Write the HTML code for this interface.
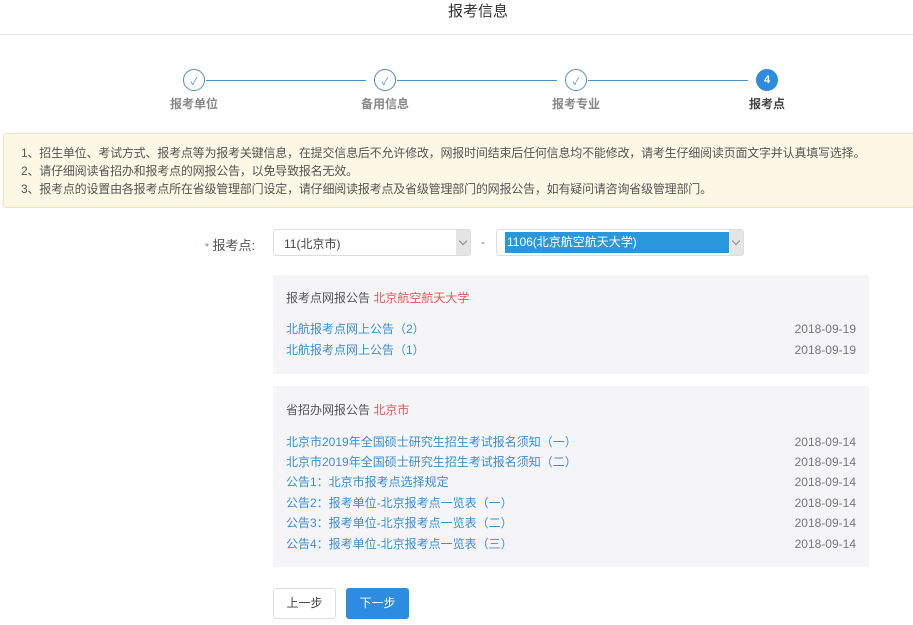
<!DOCTYPE html>
<html><head><meta charset="utf-8"><style>
*{margin:0;padding:0;box-sizing:border-box}
body{width:913px;height:625px;background:#fff;font-family:"Liberation Sans","Noto Sans CJK SC",sans-serif;font-size:12px;color:#555;position:relative;overflow:hidden}
.a{position:absolute;white-space:nowrap}
.title{left:0;width:956px;top:1px;text-align:center;font-size:15px;color:#333;line-height:22px}
.hr{left:0;top:34px;width:913px;height:1px;background:#e6e6e6}
.c{position:absolute;width:22px;height:22px;border-radius:50%;border:1px solid #4a90c8;top:69px;display:flex;align-items:center;justify-content:center;color:#4a90c8;font-size:10px}
.ln{position:absolute;top:80px;height:1px;background:#4a90c8}
.lb{position:absolute;top:95px;font-size:12px;color:#888;font-weight:bold;width:80px;text-align:center}
.notice{left:3px;top:133px;width:915px;height:75px;background:#fdf8e6;border:1px solid #f3e3b1;border-radius:3px;padding:10px 0 0 17px;line-height:18px;font-size:12px;color:#555;letter-spacing:-0.2px}
.sel{position:absolute;top:229px;height:27px;border:1px solid #ddd;border-radius:3px;background:#fff}
.sel .arr{position:absolute;right:0;top:0;width:14px;height:25px;background:#e5e5e5}
.sel .arr:after{content:"";position:absolute;left:4px;top:8px;width:5px;height:5px;border-right:1px solid #888;border-bottom:1px solid #888;transform:rotate(45deg)}
.panel{position:absolute;left:273px;width:596px;background:#f5f5f7}
.row{position:absolute;left:13px;right:13px;height:20px;line-height:20px}
.row span{color:#3a8ed4}
.row b{position:absolute;right:0;font-weight:normal;color:#777}
.hd{position:absolute;left:13px;color:#555}
.hd i{font-style:normal;color:#e05a5a}
.btn{position:absolute;top:588px;width:63px;height:31px;border-radius:3px;text-align:center;line-height:29px;font-size:12px}
</style></head><body>
<div class="a title">报考信息</div>
<div class="a hr"></div>
<div class="ln" style="left:206px;width:160px"></div>
<div class="ln" style="left:397px;width:160px"></div>
<div class="ln" style="left:588px;width:160px"></div>
<div class="c" style="left:183px">✓</div>
<div class="c" style="left:374px">✓</div>
<div class="c" style="left:565px">✓</div>
<div class="c" style="left:756px;background:#2d8ce0;border-color:#2d8ce0;color:#fff;font-weight:bold;font-size:11px">4</div>
<div class="lb" style="left:154px">报考单位</div>
<div class="lb" style="left:345px">备用信息</div>
<div class="lb" style="left:536px">报考专业</div>
<div class="lb" style="left:727px;color:#444">报考点</div>
<div class="a notice">1、招生单位、考试方式、报考点等为报考关键信息，在提交信息后不允许修改，网报时间结束后任何信息均不能修改，请考生仔细阅读页面文字并认真填写选择。<br>2、请仔细阅读省招办和报考点的网报公告，以免导致报名无效。<br>3、报考点的设置由各报考点所在省级管理部门设定，请仔细阅读报考点及省级管理部门的网报公告，如有疑问请咨询省级管理部门。</div>
<div class="a" style="left:205px;top:235px;font-size:13px;color:#555"><span style="color:#e05a5a;font-size:10px">*</span> 报考点:</div>
<div class="sel" style="left:273px;width:198px"><div class="a" style="left:10px;top:5px;font-size:12px;color:#444">11(北京市)</div><div class="arr"></div></div>
<div class="a" style="left:481px;top:235px;color:#777">-</div>
<div class="sel" style="left:496px;width:248px"><div class="a" style="left:8px;top:2px;width:224px;height:21px;background:#2a96dc;color:#fff;line-height:21px;padding-left:2px">1106(北京航空航天大学)</div><div class="arr"></div></div>
<div class="panel" style="top:275px;height:99px">
<div class="hd" style="top:14px">报考点网报公告 <i>北京航空航天大学</i></div>
<div class="row" style="top:44px"><span>北航报考点网上公告（2）</span><b>2018-09-19</b></div>
<div class="row" style="top:65px"><span>北航报考点网上公告（1）</span><b>2018-09-19</b></div>
</div>
<div class="panel" style="top:386px;height:181px">
<div class="hd" style="top:15px">省招办网报公告 <i>北京市</i></div>
<div class="row" style="top:46px"><span>北京市2019年全国硕士研究生招生考试报名须知（一）</span><b>2018-09-14</b></div>
<div class="row" style="top:66px"><span>北京市2019年全国硕士研究生招生考试报名须知（二）</span><b>2018-09-14</b></div>
<div class="row" style="top:86px"><span>公告1：北京市报考点选择规定</span><b>2018-09-14</b></div>
<div class="row" style="top:107px"><span>公告2：报考单位-北京报考点一览表（一）</span><b>2018-09-14</b></div>
<div class="row" style="top:127px"><span>公告3：报考单位-北京报考点一览表（二）</span><b>2018-09-14</b></div>
<div class="row" style="top:148px"><span>公告4：报考单位-北京报考点一览表（三）</span><b>2018-09-14</b></div>
</div>
<div class="btn" style="left:273px;border:1px solid #ddd;color:#444;background:#fff">上一步</div>
<div class="btn" style="left:346px;background:#2d8ce0;color:#fff;border:1px solid #2d8ce0">下一步</div>
</body></html>
